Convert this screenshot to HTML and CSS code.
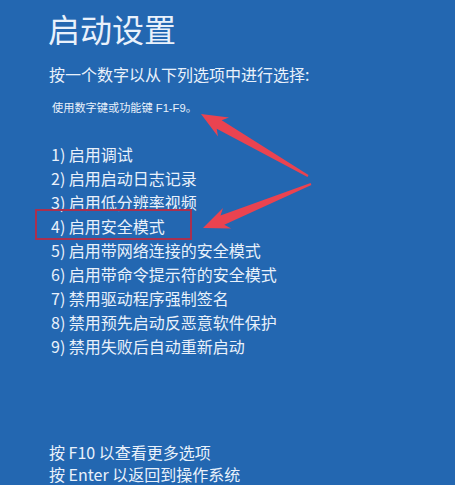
FILE: index.html
```html
<!DOCTYPE html>
<html lang="zh-CN">
<head>
<meta charset="utf-8">
<title>启动设置</title>
<link rel="stylesheet" href="styles.css">
</head>
<body>
<main class="screen">
  <h1 class="title">启动设置</h1>
  <p class="lead">按一个数字以从下列选项中进行选择:</p>
  <p class="hint">使用数字键或功能键 F1-F9。</p>
  <ol class="options">
    <li>1) 启用调试</li>
    <li>2) 启用启动日志记录</li>
    <li>3) 启用低分辨率视频</li>
    <li class="marked">4) 启用安全模式</li>
    <li>5) 启用带网络连接的安全模式</li>
    <li>6) 启用带命令提示符的安全模式</li>
    <li>7) 禁用驱动程序强制签名</li>
    <li>8) 禁用预先启动反恶意软件保护</li>
    <li>9) 禁用失败后自动重新启动</li>
  </ol>
  <div class="footer">
    <p>按 F10 以查看更多选项</p>
    <p>按 Enter 以返回到操作系统</p>
  </div>
  <svg class="arrows" width="455" height="485" viewBox="0 0 455 485" aria-hidden="true">
    <polygon class="arrow" points="201,114 229,117.5 221.7,120.2 308.5,175.1 307.5,176.9 216.7,128.8 218,136.5"/>
    <polygon class="arrow" points="203,228 223,208 220.5,215.5 310.6,183.1 311.4,184.9 224.3,224.7 231.2,228.4"/>
  </svg>
</main>
</body>
</html>
```
FILE: styles.css
```css
html, body {
  margin: 0;
  padding: 0;
}
body {
  background: #2367b1;
  color: #e9f1fb;
  font-family: "Noto Sans CJK SC", "Noto Sans", sans-serif;
  width: 455px;
  height: 485px;
  overflow: hidden;
}
.screen {
  position: relative;
  width: 455px;
  height: 485px;
  padding-left: 49px;
  box-sizing: border-box;
  display: flex;
  flex-direction: column;
}
.title {
  margin: 8px 0 0 -1px;
  font-size: 32px;
  line-height: 40px;
  font-weight: 400;
}
.lead {
  margin: 16px 0 0;
  font-size: 16px;
  line-height: 20px;
}
.hint {
  margin: 16px 0 0 3px;
  font-family: "Liberation Sans", "Noto Sans CJK SC", sans-serif;
  font-size: 11.2px;
  line-height: 16px;
}
.options {
  list-style: none;
  margin: 26px 0 0;
  padding: 0 0 0 2px;
  font-size: 16px;
  line-height: 24px;
}
.options li {
  position: relative;
}
.marked::after {
  content: "";
  position: absolute;
  left: -16px;
  top: -5px;
  width: 153px;
  height: 27px;
  border: 2px solid #a9304f;
}
.footer {
  margin-top: 83px;
  font-size: 16px;
  line-height: 22px;
}
.footer p {
  margin: 0;
}
.arrows {
  position: absolute;
  left: 0;
  top: 0;
  pointer-events: none;
}
.arrow {
  fill: #ea4350;
  filter: blur(0.6px);
}
```
